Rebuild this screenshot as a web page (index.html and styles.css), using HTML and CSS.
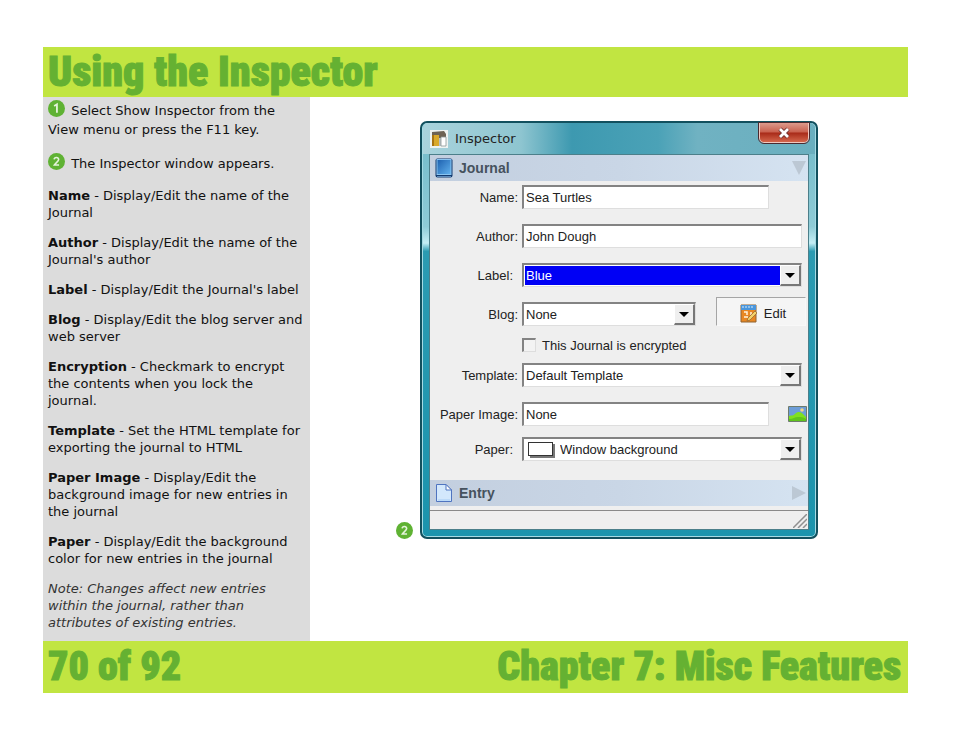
FILE: index.html
```
<!DOCTYPE html>
<html lang="en">
<head>
  <meta charset="UTF-8">
  <meta name="viewport" content="width=device-width, initial-scale=1.0">
  <title>Using the Inspector</title>
  <link rel="stylesheet" href="styles.css">
</head>
<body>
  <div class="page">
    <header class="band">
      <h1>Using the Inspector</h1>
    </header>

    <div class="content">
      <aside class="sidebar">
        <p class="step"><svg class="badge" viewBox="0 0 16 16"><circle cx="8" cy="8" r="8" fill="#5fb233"/><path d="M5.8 5.6 8.4 4v8" fill="none" stroke="#e4f3da" stroke-width="1.7"/></svg> Select Show Inspector from the<br>View menu or press the F11 key.</p>
        <p class="step"><svg class="badge" viewBox="0 0 16 16"><circle cx="8" cy="8" r="8" fill="#5fb233"/><path d="M5.8 6C6 3.6 10.2 3.7 10 6.2 9.9 8 7.200 9.300 6 11.300h4.400" fill="none" stroke="#e4f3da" stroke-width="1.500"/></svg> The Inspector window appears.</p>
        <p><b>Name</b> - Display/Edit the name of the<br>Journal</p>
        <p><b>Author</b> - Display/Edit the name of the<br>Journal's author</p>
        <p><b>Label</b> - Display/Edit the Journal's label</p>
        <p><b>Blog</b> - Display/Edit the blog server and<br>web server</p>
        <p><b>Encryption</b> - Checkmark to encrypt<br>the contents when you lock the<br>journal.</p>
        <p><b>Template</b> - Set the HTML template for<br>exporting the journal to HTML</p>
        <p><b>Paper Image</b> - Display/Edit the<br>background image for new entries in<br>the journal</p>
        <p><b>Paper</b> - Display/Edit the background<br>color for new entries in the journal</p>
        <p class="note">Note: Changes affect new entries<br>within the journal, rather than<br>attributes of existing entries.</p>
      </aside>

      <main class="figure">
        <svg class="badge" viewBox="0 0 16 16"><circle cx="8" cy="8" r="8" fill="#5fb233"/><path d="M5.8 6C6 3.6 10.2 3.7 10 6.2 9.9 8 7.200 9.300 6 11.300h4.400" fill="none" stroke="#e4f3da" stroke-width="1.500"/></svg>

        <section class="window">
          <div class="titlebar">
            <svg class="app-icon" viewBox="0 0 18 18"><path d="M0 0h18v18H0z" fill="#eef3f2"/><path d="M2 2 14 1l2 3v4H2z" fill="#6d6355"/><path d="M2 5h7v11H2z" fill="#d9a92b"/><path d="M2 5h2v11H2z" fill="#a87413"/><path d="M9 8h4v8H9z" fill="#b9c2c4"/><path d="M11 7h5v9h-5z" fill="#fff" stroke="#8e9798" stroke-width=".8"/></svg>
            <span class="title">Inspector</span>
            <button class="close" aria-label="Close">
              <svg viewBox="0 0 14 12"><path d="m3 2 8 8M11 2 3 10" stroke="#6a3030" stroke-width="4.500"/><path d="m3 2 8 8M11 2 3 10" stroke="#fff" stroke-width="2.800"/></svg>
            </button>
          </div>

          <div class="panel">
            <div class="section-bar">
              <svg class="section-icon" viewBox="0 0 18 20"><defs><linearGradient id="book" x1="0" y1="0" x2="1" y2="1"><stop offset="0" stop-color="#1c5fae"/><stop offset="1" stop-color="#62b2ee"/></linearGradient></defs><rect x=".5" y=".5" width="17" height="19" rx="2" fill="#123a70"/><rect x="2" y="1.500" width="14" height="15" fill="url(#book)" stroke="#8ac4f0"/><path d="M2 18.500h14" stroke="#5d8cbc"/></svg>
              <h2>Journal</h2>
              <svg class="toggle" viewBox="0 0 14 14"><path d="M0 0h14L7 14z" fill="#bcc8d4"/></svg>
            </div>

            <form class="form">
              <div class="row">
                <label for="name">Name:</label>
                <input type="text" id="name" class="field short" value="Sea Turtles">
              </div>
              <div class="row">
                <label for="author">Author:</label>
                <input type="text" id="author" class="field" value="John Dough">
              </div>
              <div class="row">
                <label for="label" class="inset">Label:</label>
                <div class="select selected">
                  <select id="label" class="field"><option>Blue</option></select>
                </div>
              </div>
              <div class="row">
                <label for="blog">Blog:</label>
                <div class="select blog">
                  <select id="blog" class="field"><option>None</option></select>
                </div>
                <button type="button" class="edit">
                  <svg viewBox="0 0 18 19"><path d="M1 1h15v17H1z" fill="#e88722" stroke="#8f6231"/><path d="M1 1h15v5H1z" fill="#4a96dc"/><path d="M3 2v2m3-2v2m3-2v2m3-2v2" stroke="#d8ecfb"/><path d="M4 8h3v3M11 8v3M4 13h4" fill="none" stroke="#fff3dc" stroke-width="1.500"/><path d="m7 17 1-3 7-7 2 2-7 7z" fill="#f3d169" stroke="#8f6231" stroke-width=".7"/></svg>
                  Edit
                </button>
              </div>
              <div class="row check">
                <input type="checkbox" id="encrypted">
                <label for="encrypted">This Journal is encrypted</label>
              </div>
              <div class="row">
                <label for="template">Template:</label>
                <div class="select">
                  <select id="template" class="field"><option>Default Template</option></select>
                </div>
              </div>
              <div class="row">
                <label for="paper-image">Paper Image:</label>
                <input type="text" id="paper-image" class="field short" value="None">
                <button type="button" class="browse" aria-label="Choose image">
                  <svg viewBox="0 0 19 16"><path d="M.5.5h18v15H.5z" fill="#6d9dd8" stroke="#6e7b6c"/><path d="M1 10C4 9 5 10 7 8c3-3 6-2 8 0l3 3v4H1z" fill="#7fe01e"/><path d="M1 13c4 0 6-2 9-2s5 0 8 2v2H1z" fill="#5fc41c"/><circle cx="14" cy="4" r="1.800" fill="#f3d58a"/></svg>
                </button>
              </div>
              <div class="row last">
                <label for="paper" class="inset">Paper:</label>
                <div class="select paper">
                  <span class="swatch"></span>
                  <select id="paper" class="field"><option>Window background</option></select>
                </div>
              </div>
            </form>

            <div class="section-bar">
              <svg class="section-icon" viewBox="0 0 18 20"><path d="M1.500 1.500H11l5.500 5.500v11.500h-15z" fill="#d3e8fc" stroke="#4f74c0"/><path d="M11 1.500V7h5.500z" fill="#fff" stroke="#4f74c0"/><path d="M3 17h12" stroke="#a4cdf5"/></svg>
              <h2>Entry</h2>
              <svg class="toggle" viewBox="0 0 14 14"><path d="m0 0 14 7-14 7z" fill="#bcc8d4"/></svg>
            </div>

            <div class="statusbar">
              <svg viewBox="0 0 14 14"><path d="M0 14 14 0M5 14l9-9M10 14l4-4" stroke="#909090" stroke-width="1.500"/></svg>
            </div>
          </div>
        </section>
      </main>
    </div>

    <footer class="band">
      <span>70 of 92</span>
      <span>Chapter 7: Misc Features</span>
    </footer>
  </div>
</body>
</html>
```
FILE: styles.css
```
* {
  box-sizing: border-box;
}
body {
  font-family: "DejaVu Sans", Verdana, sans-serif;
  font-size: 13px;
  line-height: 17px;
  margin: 0;
  background: #fff;
  color: #111;
}
.page {
  padding: 47px 46px 45px 43px;
}
.band {
  display: flex;
  justify-content: space-between;
  align-items: center;
  height: 52px;
  padding: 0 7px 0 5px;
  background: #c1e541;
  color: #65b132;
  font-family: Impact, "Roboto Condensed", sans-serif;
  font-size: 40px;
  line-height: 50px;
  font-weight: 900;
  white-space: nowrap;
  -webkit-text-stroke: 1px #65b132;
}
header.band {
  height: 50px;
  font-size: 42px;
}
.band h1 {
  margin: 0;
  font: inherit;
}
.content {
  display: flex;
}
.sidebar {
  flex: 0 0 267px;
  padding: 3px 0 10px 5px;
  background: #dcdcdc;
  white-space: nowrap;
}
.sidebar p {
  margin: 0 0 13px;
}
.sidebar .step {
  margin-bottom: 14px;
  line-height: 19px;
}
.sidebar .note {
  margin: 0;
  color: #333;
  font-style: italic;
}
.badge {
  width: 17px;
  height: 17px;
}
.step .badge {
  margin-right: 2px;
  vertical-align: -2px;
}
.figure {
  flex: 1;
  display: flex;
  align-items: flex-start;
  gap: 7px;
  padding: 24px 0 0 86px;
}
.figure .badge {
  margin-top: 401px;
}

/* Inspector window */
.window {
  width: 100%;
  max-width: 398px;
  padding: 0 7px 7px;
  border: 2px solid #12505e;
  border-radius: 7px;
  background: linear-gradient(#6fb9c8, #8ecbd6 25%, #c4eef5 29%, #2b9bb2 31%, #1b94ad);
  box-shadow: inset 0 0 0 1px #a5dbe4;
  color: #222;
  font-family: "Liberation Sans", sans-serif;
}
.titlebar {
  display: flex;
  align-items: center;
  height: 31px;
  margin: 0 -6px;
  padding: 0 6px 0 7px;
  border-radius: 5px 5px 0 0;
  background: linear-gradient(90deg, #a9d3dc, #8ec5d0 25%, #3d99b0 38%, #4ba2b7 60%, #70b2c2 70%, #6aafbf);
}
.app-icon {
  width: 18px;
  height: 18px;
}
.title {
  flex: 1;
  padding-left: 7px;
  font-family: "DejaVu Sans", Verdana, sans-serif;
}
.close {
  align-self: flex-start;
  width: 50px;
  height: 20px;
  padding: 0;
  border: 1px solid #f0c8c0;
  border-top: 0;
  border-radius: 0 0 5px 5px;
  outline: 1px solid #4a2a30;
  background: linear-gradient(#dc9a8c, #c9604e 48%, #a82a18 52%, #d3664c);
}
.close svg {
  display: block;
  width: 14px;
  height: 12px;
  margin: 0 auto;
}
.panel {
  border: 1px solid #4c7f8a;
  background: #efefef;
}
.section-bar {
  display: flex;
  align-items: center;
  height: 26px;
  padding: 0 2px 0 5px;
  background: linear-gradient(90deg, #c3cfdf, #c9d6e6 50%, #d5e3f1);
}
.section-bar h2 {
  flex: 1;
  margin: 0;
  padding-left: 6px;
  color: #46525e;
  font-size: 14px;
}
.section-icon {
  width: 18px;
  height: 20px;
}
.toggle {
  width: 14px;
  height: 14px;
}
.form {
  display: flex;
  flex-direction: column;
  gap: 15px;
  padding: 4px 6px 19px 0;
}
.row {
  display: flex;
  align-items: center;
  height: 24px;
}
.row label {
  flex: 0 0 88px;
  margin-right: 4px;
  text-align: right;
  white-space: nowrap;
}
.row label.inset {
  padding-right: 5px;
}
.field {
  flex: 1;
  min-width: 0;
  width: 100%;
  height: 24px;
  margin: 0;
  padding: 0 2px;
  border: 1px solid #dedede;
  border-top: 2px solid #838383;
  border-left: 2px solid #838383;
  border-radius: 0;
  background: #fff;
  color: #222;
  font: inherit;
  appearance: none;
}
.short {
  flex: 0 0 247px;
}
.select {
  position: relative;
  flex: 1;
}
.select.blog {
  flex: 0 0 174px;
}
.select::before {
  content: "";
  position: absolute;
  top: 2px;
  right: 1px;
  width: 18px;
  height: 18px;
  border: 1px solid #fff;
  border-right: 2px solid #777;
  border-bottom: 2px solid #777;
  background: #efefef;
}
.select::after {
  content: "";
  position: absolute;
  top: 10px;
  right: 7px;
  border: 5px solid transparent;
  border-top-color: #000;
  border-bottom: 0;
}
.selected .field {
  background: #0000f5;
  box-shadow: inset 0 0 0 1px #fff;
  color: #fff;
}
.swatch {
  position: absolute;
  top: 5px;
  left: 6px;
  width: 25px;
  height: 14px;
  border: 1px solid #333;
  background: #fff;
  box-shadow: 2px 2px #777;
}
.paper .field {
  padding-left: 36px;
}
.edit {
  display: flex;
  align-items: center;
  justify-content: center;
  gap: 6px;
  flex: 1;
  height: 29px;
  margin: -6px -4px 0 20px;
  padding: 4px 0 0 4px;
  border: 1px solid #f8f8f8;
  border-top-color: #a5a5a5;
  border-left-color: #a5a5a5;
  background: #f5f5f5;
  color: #222;
  font: inherit;
}
.edit svg {
  width: 18px;
  height: 19px;
}
.row.check {
  height: 14px;
  margin: -3px 0 -4px;
  padding-left: 92px;
}
.check input {
  width: 14px;
  height: 14px;
  margin: 0 6px 0 0;
  border: 1px solid #ddd;
  border-top: 2px solid #838383;
  border-left: 2px solid #838383;
  background: #f3f3f3;
  appearance: none;
}
.check label {
  flex: none;
  margin: 0;
}
.row.last {
  margin-top: -4px;
}
.browse {
  width: 19px;
  height: 16px;
  margin: 0 -5px 0 auto;
  padding: 0;
  border: 0;
  background: none;
}
.browse svg {
  display: block;
}
.statusbar {
  display: flex;
  justify-content: flex-end;
  align-items: flex-end;
  height: 19px;
  margin-top: 4px;
  padding: 0 1px 1px;
  border-top: 1px solid #8a8a8a;
}
.statusbar svg {
  width: 14px;
  height: 14px;
}
```
